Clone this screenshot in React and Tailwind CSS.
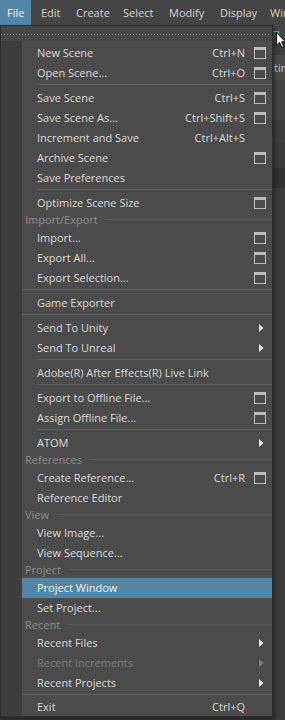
import React from 'react'

const menu = [
  { label: 'New Scene', sc: 'Ctrl+N', box: true },
  { label: 'Open Scene...', sc: 'Ctrl+O', box: true },
  { sep: 'short' },
  { label: 'Save Scene', sc: 'Ctrl+S', box: true },
  { label: 'Save Scene As...', sc: 'Ctrl+Shift+S', box: true },
  { label: 'Increment and Save', sc: 'Ctrl+Alt+S' },
  { label: 'Archive Scene', box: true },
  { label: 'Save Preferences' },
  { sep: 'short' },
  { label: 'Optimize Scene Size', box: true },
  { header: 'Import/Export' },
  { label: 'Import...', box: true },
  { label: 'Export All...', box: true },
  { label: 'Export Selection...', box: true },
  { sep: 'full' },
  { label: 'Game Exporter' },
  { sep: 'full' },
  { label: 'Send To Unity', sub: true },
  { label: 'Send To Unreal', sub: true },
  { sep: 'short' },
  { label: 'Adobe(R) After Effects(R) Live Link' },
  { sep: 'short' },
  { label: 'Export to Offline File...', box: true },
  { label: 'Assign Offline File...', box: true },
  { sep: 'short' },
  { label: 'ATOM', sub: true },
  { header: 'References' },
  { label: 'Create Reference...', sc: 'Ctrl+R', box: true },
  { label: 'Reference Editor' },
  { header: 'View' },
  { label: 'View Image...' },
  { label: 'View Sequence...' },
  { header: 'Project' },
  { label: 'Project Window', active: true },
  { label: 'Set Project...' },
  { header: 'Recent' },
  { label: 'Recent Files', sub: true },
  { label: 'Recent Increments', sub: true, disabled: true },
  { label: 'Recent Projects', sub: true },
  { sep: 'full' },
  { label: 'Exit', sc: 'Ctrl+Q', last: true },
]

const bar = [
  { label: 'File', cls: 'w-[31px] pl-[7px] bg-[#5285a6] text-[#f0f0f0]' },
  { label: 'Edit', cls: 'w-[36px] pl-[10px]' },
  { label: 'Create', cls: 'w-[48px] pl-[9px]' },
  { label: 'Select', cls: 'w-[46px] pl-[8px]' },
  { label: 'Modify', cls: 'w-[51px] pl-[8px]' },
  { label: 'Display', cls: 'w-[51px] pl-[8px]' },
  { label: 'Windows', cls: 'pl-[7px]' },
]

function Arrow({ dim }) {
  return (
    <svg width="5" height="8" viewBox="0 0 5 8">
      <path d="M0 0L4.5 4L0 8Z" fill={dim ? '#808080' : '#e8e8e8'} />
    </svg>
  )
}

function Row({ item }) {
  if (item.sep) {
    return (
      <div className="h-[5px] pt-[1px]">
        <div className={`h-px bg-[#626262] ${item.sep === 'short' ? 'ml-[16px]' : ''}`} />
      </div>
    )
  }
  if (item.header) {
    return (
      <div className="flex h-[15px] items-center pl-[3px] text-[#8b8b8b]">
        <span>{item.header}</span>
        <div className="ml-[8px] mt-[-2px] h-px flex-1 bg-[#5c5c5c]" />
      </div>
    )
  }
  return (
    <div
      className={`flex items-center pl-[15px] pr-[6px] ${item.last ? 'h-[18px]' : 'h-[20px]'} ${
        item.active ? 'bg-[#5285a6] text-[#f2f2f2]' : item.disabled ? 'text-[#7c7c7c]' : 'text-[#dadada]'
      }`}
    >
      <span className="flex-1 whitespace-nowrap">{item.label}</span>
      {item.sc && <span className="whitespace-nowrap">{item.sc}</span>}
      <div className="ml-[9px] flex h-[12px] w-[12px] items-center">
        {item.box && <span className="block h-[12px] w-[12px] border border-t-[3px] border-[#bdbdbd]" />}
        {item.sub && (
          <span className="pl-[5px]">
            <Arrow dim={item.disabled} />
          </span>
        )}
      </div>
    </div>
  )
}

export default function App() {
  return (
    <div className="relative h-[720px] w-[285px] overflow-hidden bg-[#3b3b3b] font-['Open_Sans',sans-serif] text-[11px]">
      <div className="flex h-[25px] items-center bg-[#444444] text-[#d2d2d2]">
        {bar.map((b) => (
          <div key={b.label} className={`h-[25px] shrink-0 whitespace-nowrap leading-[25px] ${b.cls}`}>
            {b.label}
          </div>
        ))}
      </div>

      {/* stuff behind the menu */}
      <div className="flex flex-col">
        <div className="h-[18px] bg-[#464646]" />
        <div className="h-[12px] bg-[#3e3e3e]" />
        <div className="h-[25px] bg-[#484848] pl-[274px] leading-[25px] text-[#c8c8c8]">tin</div>
        <div className="h-[40px] bg-[#434343]" />
        <div className="h-[22px] bg-[#3d3d3d]" />
        <div className="h-[26px] bg-[#3a3a3a]" />
        <div className="h-[20px] bg-[#303030]" />
        <div className="h-[530px] bg-[#3b3b3b]" />
      </div>

      <svg className="absolute left-[273px] top-[31px]" width="7" height="7" viewBox="0 0 7 7">
        <path d="M0 0.5H5.5V6" stroke="#3fb0c6" strokeWidth="1.5" fill="none" />
      </svg>
      <svg className="absolute left-[276px] top-[32px]" width="10" height="17" viewBox="0 0 10 17">
        <path d="M0.5 0.5V13.5L3.5 10.5L5.8 15.5L7.8 14.6L5.6 9.8H9.5Z" fill="#ffffff" stroke="#000000" strokeWidth="1" />
      </svg>

      <div className="absolute left-0 top-[25px] w-[273px] border border-b-2 border-[#2c2c2c] shadow-[2px_2px_3px_rgba(0,0,0,0.35)]">
        <div className="flex h-[15px] items-start bg-[#464646] pt-[8px]">
          <div className="h-px w-[270px] bg-[repeating-linear-gradient(90deg,#8a8a8a_0_1px,transparent_1px_3px)]" />
        </div>
        <div className="flex">
          <div className="w-[21px] bg-[#3d3d3d]" />
          <div className="flex-1 bg-[#4b4b4b] pt-[2px]">
            {menu.map((item, i) => (
              <Row key={i} item={item} />
            ))}
          </div>
        </div>
      </div>
    </div>
  )
}
